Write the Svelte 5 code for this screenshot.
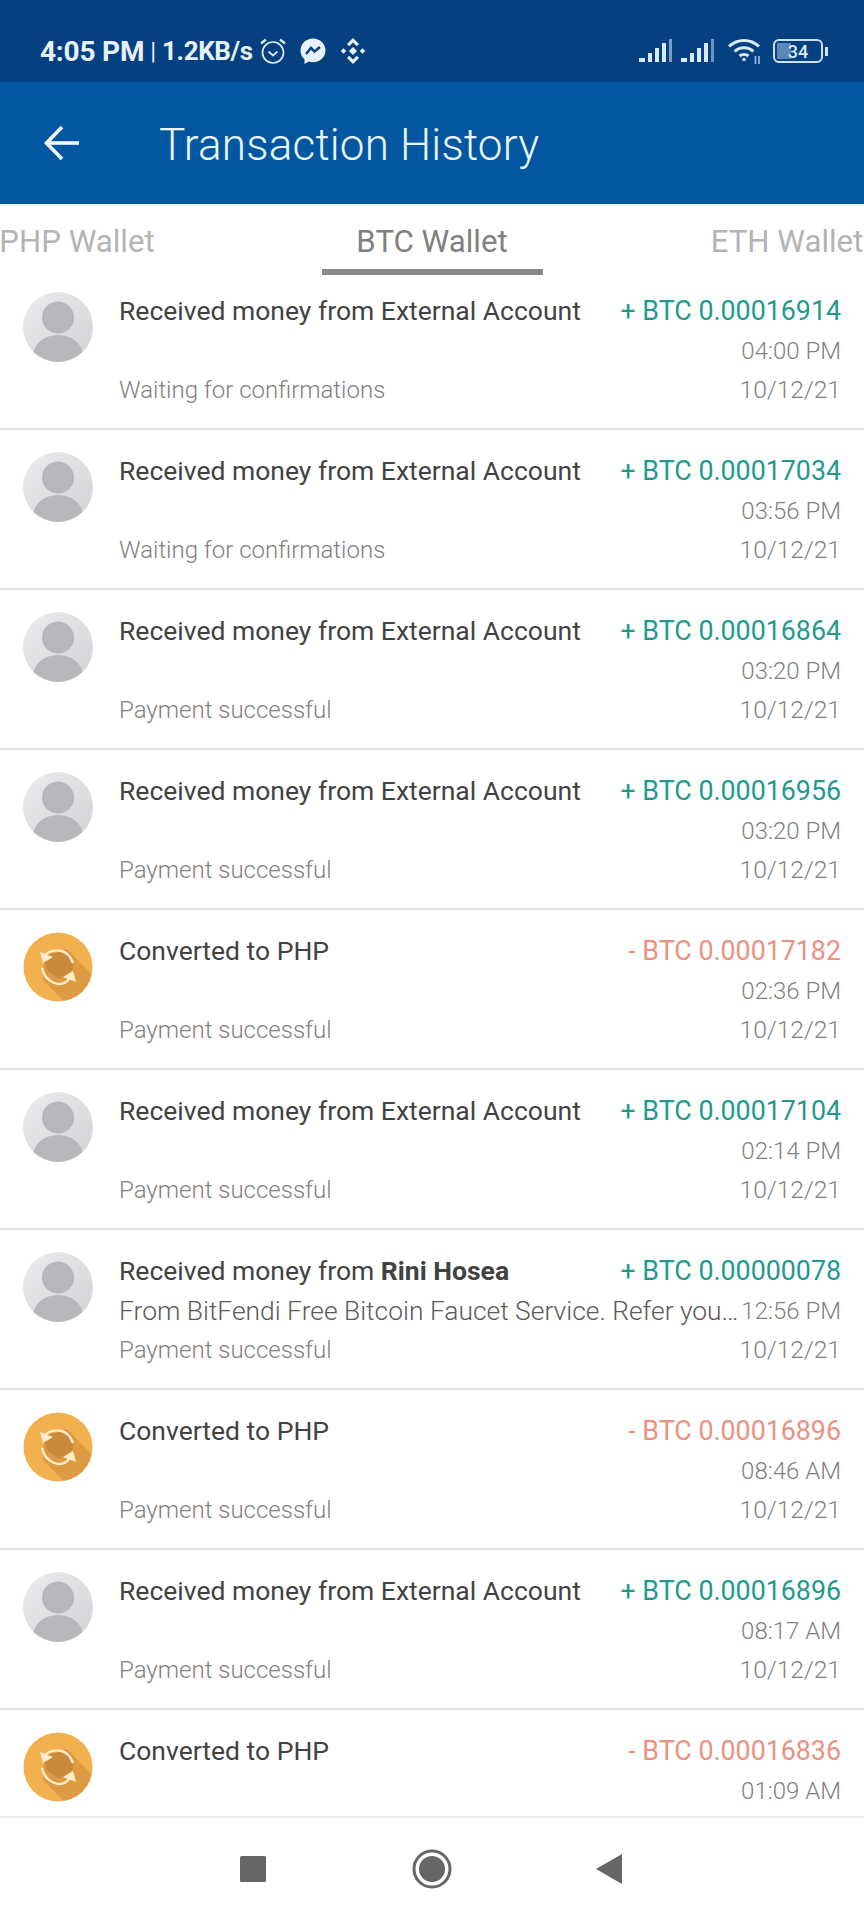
<script>
  const received = 'Received money from External Account';
  const conv = 'Converted to PHP';
  const ok = 'Payment successful';
  const wait = 'Waiting for confirmations';
  const rows = [
    { kind: 'in', title: received, amount: '+ BTC 0.00016914', time: '04:00 PM', status: wait },
    { kind: 'in', title: received, amount: '+ BTC 0.00017034', time: '03:56 PM', status: wait },
    { kind: 'in', title: received, amount: '+ BTC 0.00016864', time: '03:20 PM', status: ok },
    { kind: 'in', title: received, amount: '+ BTC 0.00016956', time: '03:20 PM', status: ok },
    { kind: 'out', title: conv, amount: '- BTC 0.00017182', time: '02:36 PM', status: ok },
    { kind: 'in', title: received, amount: '+ BTC 0.00017104', time: '02:14 PM', status: ok },
    { kind: 'in', title: 'Received money from ', bold: 'Rini Hosea', note: 'From BitFendi Free Bitcoin Faucet Service. Refer you…', amount: '+ BTC 0.00000078', time: '12:56 PM', status: ok },
    { kind: 'out', title: conv, amount: '- BTC 0.00016896', time: '08:46 AM', status: ok },
    { kind: 'in', title: received, amount: '+ BTC 0.00016896', time: '08:17 AM', status: ok },
    { kind: 'out', title: conv, amount: '- BTC 0.00016836', time: '01:09 AM' }
  ];
</script>

<div class="page">
  <header class="status">
    <span class="clock">4:05 PM</span><span class="pipe">|</span><span class="speed">1.2KB/s</span>
    <svg class="alarm" viewBox="0 0 30 30" width="30" height="30" fill="none" stroke="#dbe9f6" stroke-width="1.7">
      <circle cx="15" cy="16.500" r="10.500" />
      <path d="M10.500 15.500l4.500 4 4.500-4" />
      <path d="M3 7.500L8 3.500M27 7.500L22 3.500" stroke-width="2.400" />
    </svg>
    <svg class="messenger" viewBox="0 0 28 28" width="28" height="28">
      <path fill="#e8f1fa" d="M14 1.500C7 1.500 1.500 6.700 1.500 13.500c0 3.600 1.500 6.700 4 8.800V27l4.300-2.400c1.300.4 2.700.6 4.200.6 7 0 12.500-5.200 12.500-11.700S21 1.500 14 1.500z" />
      <path fill="none" stroke="#0a4687" stroke-width="2.600" d="M7 17l5-6 3.500 3.500L21 10" />
    </svg>
    <svg class="binance" viewBox="0 0 28 28" width="28" height="28" fill="#e8f1fa">
      <path d="M14 1l6 6-2.200 2.200L14 5.400l-3.800 3.800L8 7z" />
      <path d="M14 27l6-6-2.200-2.200L14 22.600l-3.800-3.800L8 21z" />
      <path d="M4.500 11.300L7.200 14l-2.700 2.700L1.800 14z" />
      <path d="M23.500 11.300l2.700 2.700-2.700 2.700-2.700-2.700z" />
      <path d="M14 10l4 4-4 4-4-4z" />
    </svg>
    <span class="grow"></span>
    <svg class="signal" viewBox="0 0 33 24" width="33" height="24">
      <rect x="0" y="19" width="6" height="4" fill="#dbe9f6" />
      <rect x="9" y="14" width="4" height="9" fill="#dbe9f6" />
      <rect x="16" y="9" width="4" height="14" fill="#dbe9f6" />
      <rect x="23" y="4" width="4" height="19" fill="#dbe9f6" />
      <rect x="30" y="0" width="3" height="23" fill="#7d9fc6" />
    </svg>
    <svg class="signal two" viewBox="0 0 33 24" width="33" height="24">
      <rect x="0" y="19" width="6" height="4" fill="#dbe9f6" />
      <rect x="9" y="14" width="4" height="9" fill="#dbe9f6" />
      <rect x="16" y="9" width="4" height="14" fill="#dbe9f6" />
      <rect x="23" y="4" width="4" height="19" fill="#dbe9f6" />
      <rect x="30" y="0" width="3" height="23" fill="#6f93bd" />
    </svg>
    <svg class="wifi" viewBox="0 0 36 28" width="36" height="28" fill="none" stroke="#dbe9f6" stroke-width="3">
      <path d="M2 9.500C10.500 1.500 23.500 1.500 32 9.500" />
      <path d="M7.500 14.500C13 9.500 21 9.500 26.500 14.500" />
      <path d="M12.500 19C15 17 19 17 21.500 19" />
      <circle cx="17" cy="22.500" r="1.800" fill="#dbe9f6" stroke="none" />
      <path d="M28.500 19v8M32 19v8" stroke-width="1.600" stroke="#9fbcdb" />
    </svg>
    <div class="battery"><span class="fill"></span><span class="level">34</span></div>
    <span class="nub"></span>
  </header>

  <div class="appbar">
    <svg class="back" viewBox="0 0 36 36" width="36" height="36" fill="none" stroke="#f4f9fd" stroke-width="3.600">
      <path d="M35 18H3" />
      <path d="M18 2L2.500 18 18 34" />
    </svg>
    <h1>Transaction History</h1>
  </div>

  <nav class="tabs">
    <div class="tab">PHP Wallet</div>
    <div class="tab active">BTC Wallet</div>
    <div class="tab">ETH Wallet</div>
  </nav>

  <main class="list">
    {#each rows as r}
      <section class="row">
        {#if r.kind === 'in'}
          <svg class="avatar" viewBox="0 0 70 70" width="70" height="70">
            <defs>
              <linearGradient id="ag" x1="0" y1="0" x2="1" y2="1">
                <stop offset="0" stop-color="#ececee" />
                <stop offset="1" stop-color="#d2d2d6" />
              </linearGradient>
              <clipPath id="ac"><circle cx="35" cy="35" r="35" /></clipPath>
            </defs>
            <circle cx="35" cy="35" r="35" fill="url(#ag)" />
            <g clip-path="url(#ac)" fill="#b6b6bb">
              <circle cx="35" cy="25.500" r="16" />
              <ellipse cx="35" cy="63" rx="24.500" ry="20" />
            </g>
          </svg>
        {:else}
          <svg class="avatar" viewBox="0 0 70 70" width="70" height="70">
            <defs>
              <clipPath id="oc"><circle cx="35" cy="35" r="34.500" /></clipPath>
            </defs>
            <circle cx="35" cy="35" r="34.500" fill="#f3b04e" />
            <path clip-path="url(#oc)" fill="#dd9a43" d="M21 24L44 17 72 46 50 72 40 68 20 48z" />
            <path fill="#c98a3a" d="M21 27C26 20 42 16 50 31L50 38 42 43 36 47 24 38z" />
            <g fill="none" stroke="#fbeccb" stroke-width="2.400">
              <path d="M20 26C26 16 44 14 50 31" />
              <path d="M19 36C22 50 38 58 47 46" />
            </g>
            <path fill="#fbeccb" d="M17 20l3 11 10-6zM53 50l-3-11-10 6z" />
          </svg>
        {/if}
        <div class="body">
          <div class="line">
            <span class="title">{r.title}{#if r.bold}<b>{r.bold}</b>{/if}</span>
            <span class="amount" class:pos={r.kind === 'in'} class:neg={r.kind === 'out'}>{r.amount}</span>
          </div>
          <div class="line">
            <span class="note">{r.note ?? ''}</span>
            <span class="time">{r.time}</span>
          </div>
          {#if r.status}
            <div class="line last">
              <span class="state">{r.status}</span>
              <span class="time date">10/12/21</span>
            </div>
          {/if}
        </div>
      </section>
    {/each}
  </main>

  <footer class="sysnav">
    <svg class="sq" viewBox="0 0 26 26" width="26" height="26"><rect width="26" height="26" rx="1.500" fill="#666" /></svg>
    <svg viewBox="0 0 40 40" width="40" height="40">
      <circle cx="20" cy="20" r="18" fill="none" stroke="#666" stroke-width="3" />
      <circle cx="20" cy="20" r="13" fill="#666" />
    </svg>
    <svg viewBox="0 0 26 30" width="26" height="30"><path d="M0 15L26 0v30z" fill="#666" /></svg>
  </footer>
</div>

<style>
  :global(body) { margin: 0; background: #fff; }
  .page {
    width: 864px;
    height: 1920px;
    display: flex;
    flex-direction: column;
    overflow: hidden;
    font-family: Roboto, "Liberation Sans", sans-serif;
    background: #fff;
  }
  .status {
    height: 82px;
    flex: none;
    box-sizing: border-box;
    padding: 20px 36px 0 40px;
    display: flex;
    align-items: center;
    background: #054080;
    color: #e8f1fa;
  }
  .clock { font-size: 28px; font-weight: 700; letter-spacing: -0.2px; }
  .speed { font-size: 26px; font-weight: 700; letter-spacing: -0.4px; }
  .pipe { font-size: 24px; font-weight: 400; margin: 0 6px 0 6px; }
  .alarm { margin-left: 5px; }
  .messenger { margin-left: 11px; }
  .binance { margin-left: 12px; }
  .grow { flex: 1; }
  .signal.two { margin-left: 9px; }
  .wifi { margin-left: 13px; }
  .battery {
    position: relative;
    margin-left: 10px;
    width: 50px;
    height: 24px;
    box-sizing: border-box;
    border: 2.500px solid #cfe0f2;
    border-radius: 6px;
    display: flex;
    align-items: center;
    justify-content: center;
    overflow: hidden;
  }
  .fill { position: absolute; left: 2px; top: 2px; bottom: 2px; width: 14px; background: #5b86b8; }
  .level { position: relative; font-size: 18px; color: #dbe9f6; font-weight: 500; }
  .nub { width: 3px; height: 9px; margin-left: 2px; background: #cfe0f2; }
  .appbar {
    height: 122px;
    flex: none;
    display: flex;
    align-items: center;
    padding-left: 44px;
    background: #0257a0;
  }
  h1 {
    margin: 3px 0 0 79px;
    font-size: 44px;
    font-weight: 300;
    color: #eaf5fb;
    letter-spacing: 0.2px;
  }
  .tabs {
    position: relative;
    height: 71px;
    flex: none;
    display: flex;
    justify-content: center;
    gap: 134px;
    margin-bottom: -5px;
    border-top: 2px solid #e9f3f8;
    box-sizing: border-box;
  }
  .tab {
    flex: 0 0 221px;
    box-sizing: border-box;
    padding-top: 17px;
    text-align: center;
    font-size: 31.200px;
    color: #b4b4b4;
  }
  .active { color: #808080; border-bottom: 6px solid #8a8a8a; }
  .list { flex: 1; min-height: 0; overflow: hidden; }
  .row {
    height: 160px;
    box-sizing: border-box;
    display: flex;
    padding: 20.500px 23px 0;
    border-bottom: 2px solid #e1e1e1;
  }
  .avatar { flex: none; margin-top: 1.500px; }
  .body { flex: 1; min-width: 0; margin-left: 26px; }
  .line {
    display: flex;
    justify-content: space-between;
    align-items: center;
    height: 40.500px;
  }
  .line.last { height: 38px; margin-top: -1px; }
  .title { font-size: 26.500px; color: #424242; white-space: nowrap; }
  .title b { font-weight: 700; }
  .note {
    font-size: 26.400px;
    font-weight: 300;
    color: #5a5a5a;
    white-space: nowrap;
  }
  .amount { font-size: 26.800px; white-space: nowrap; }
  .pos { color: #1f9a8c; }
  .neg { color: #ea9282; }
  .time { flex: none; font-size: 24px; font-weight: 300; color: #7f7f7f; white-space: nowrap; }
  .date { font-size: 24.600px; }
  .state { font-size: 24px; font-weight: 300; color: #7f7f7f; }
  .sysnav {
    height: 104px;
    flex: none;
    box-sizing: border-box;
    border-top: 2px solid #ececec;
    display: flex;
    align-items: center;
    justify-content: center;
    gap: 144px;
    padding-right: 3px;
    background: #fff;
  }
  .sq { margin-right: 2px; }
</style>
